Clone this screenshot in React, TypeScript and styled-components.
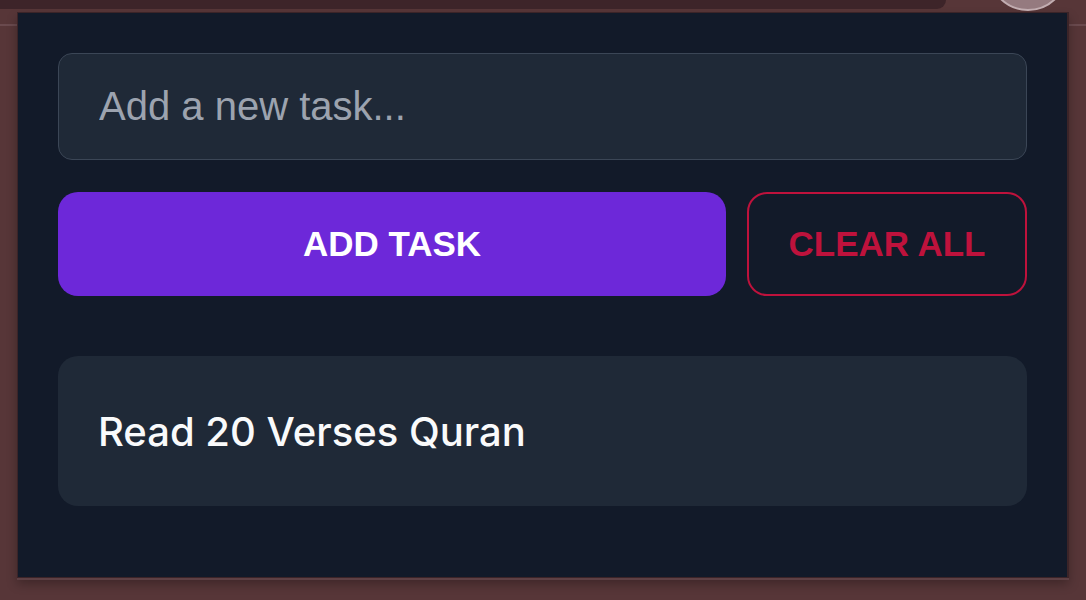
import React, { useState } from "react";
import styled, { createGlobalStyle } from "styled-components";

const GlobalStyle = createGlobalStyle`
    html, body {
        margin: 0;
        padding: 0;
        height: 100%;
    }
    body {
        background-color: #573638;
        background-image: linear-gradient(
            to bottom,
            transparent 24px,
            #6a4a4e 24px,
            #6a4a4e 26px,
            transparent 26px
        );
        font-family: "Liberation Sans", Arial, sans-serif;
        overflow: hidden;
    }
`;

const TopBar = styled.div`
    position: relative;
    height: 9px;
    display: flex;
`;

const BrowserTab = styled.div`
    width: 946px;
    height: 9px;
    background: #3d2429;
    border-bottom-right-radius: 16px;
`;

const TabCircle = styled.div`
    position: absolute;
    left: 988px;
    top: -69px;
    width: 80px;
    height: 80px;
    border-radius: 50%;
    background: #957a7f;
    border: 2px solid #c2adb1;
    box-sizing: border-box;
`;

const Panel = styled.div`
    margin: 3px 0 0 17px;
    width: 1052px;
    box-sizing: border-box;
    padding: 40px 40px 71px;
    background: #121a29;
    border: 1px solid #3b2428;
    border-right-width: 2px;
    box-shadow: 0 2px 0 #5e4044, 0 6px 10px rgba(0, 0, 0, 0.28);
    display: flex;
    flex-direction: column;
`;

const TaskInput = styled.input`
    height: 107px;
    box-sizing: border-box;
    padding: 0 40px;
    background: #1f2937;
    border: 1px solid #3b4656;
    border-radius: 14px;
    color: #f3f4f6;
    font-family: "Liberation Sans", Arial, sans-serif;
    font-size: 40px;
    outline: none;

    &::placeholder {
        color: #9ca3af;
    }
`;

const ButtonRow = styled.div`
    display: flex;
    gap: 21px;
    margin-top: 32px;
`;

const ActionButton = styled.button<{ $variant: "primary" | "danger" }>`
    height: 104px;
    box-sizing: border-box;
    border-radius: 20px;
    font-family: "Liberation Sans", Arial, sans-serif;
    font-weight: 700;
    font-size: 35px;
    text-transform: uppercase;
    cursor: pointer;
    flex: ${(p) => (p.$variant === "primary" ? 1 : "0 0 280px")};
    background: ${(p) => (p.$variant === "primary" ? "#6d28d9" : "transparent")};
    color: ${(p) => (p.$variant === "primary" ? "#ffffff" : "#be123c")};
    border: ${(p) => (p.$variant === "primary" ? "none" : "2px solid #be123c")};
`;

const TaskList = styled.ul`
    list-style: none;
    margin: 60px 0 0;
    padding: 0;
    display: flex;
    flex-direction: column;
    gap: 20px;
`;

const TaskItem = styled.li`
    height: 150px;
    box-sizing: border-box;
    padding: 0 40px;
    display: flex;
    align-items: center;
    background: #1f2937;
    border-radius: 20px;
    color: #f9fafb;
    font-family: Inter, "Noto Sans", sans-serif;
    font-weight: 500;
    font-size: 40px;
`;

const App: React.FC = () => {
    const [tasks, setTasks] = useState<string[]>(["Read 20 Verses Quran"]);
    const [text, setText] = useState("");

    const addTask = () => {
        if (!text.trim()) return;
        setTasks([...tasks, text.trim()]);
        setText("");
    };

    return (
        <>
            <GlobalStyle />
            <TopBar>
                <BrowserTab />
                <TabCircle />
            </TopBar>
            <Panel>
                <TaskInput
                    placeholder="Add a new task..."
                    value={text}
                    onChange={(e) => setText(e.target.value)}
                />
                <ButtonRow>
                    <ActionButton $variant="primary" onClick={addTask}>
                        Add Task
                    </ActionButton>
                    <ActionButton $variant="danger" onClick={() => setTasks([])}>
                        Clear All
                    </ActionButton>
                </ButtonRow>
                <TaskList>
                    {tasks.map((task, index) => (
                        <TaskItem key={index}>{task}</TaskItem>
                    ))}
                </TaskList>
            </Panel>
        </>
    );
};

export default App;
